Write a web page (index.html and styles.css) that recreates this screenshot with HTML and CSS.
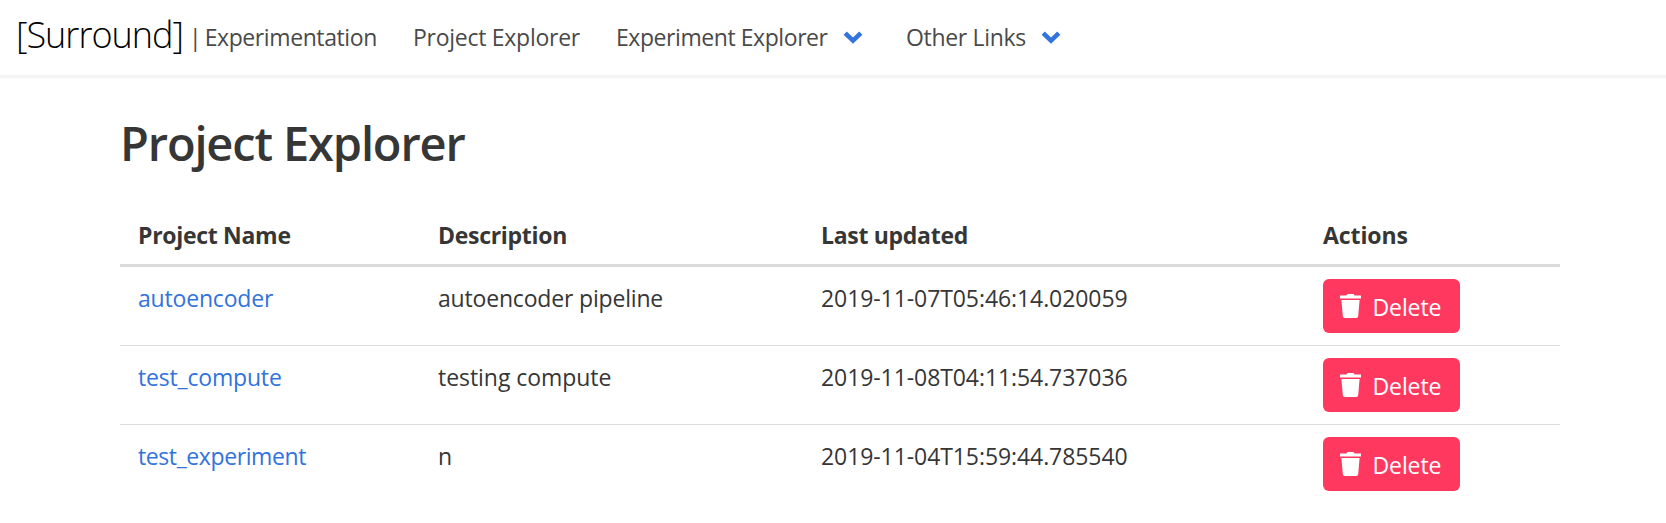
FILE: index.html
```html
<!DOCTYPE html>
<html lang="en">
<head>
<meta charset="utf-8">
<title>Project Explorer</title>
<link rel="stylesheet" href="styles.css">
</head>
<body>
<nav class="navbar">
  <a class="brand">
    <span class="logo">[Surround]</span>
    <span class="brand-sub">|<span class="brand-name">Experimentation</span></span>
  </a>
  <a class="nav-link nav-project">Project Explorer</a>
  <a class="nav-link nav-experiment">Experiment Explorer<svg class="chevron" width="20" height="13" viewBox="0 0 20 13"><path d="M2.2 2.2 10 9.6l7.8-7.4"/></svg></a>
  <a class="nav-link nav-other">Other Links<svg class="chevron" width="20" height="13" viewBox="0 0 20 13"><path d="M2.2 2.2 10 9.6l7.8-7.4"/></svg></a>
</nav>
<main class="container">
  <h1 class="title">Project Explorer</h1>
  <table class="table">
    <colgroup><col class="col-name"><col class="col-desc"><col class="col-date"><col></colgroup>
    <thead>
      <tr><th>Project Name</th><th>Description</th><th>Last updated</th><th class="actions">Actions</th></tr>
    </thead>
    <tbody>
      <tr>
        <td><a class="link">autoencoder</a></td><td>autoencoder pipeline</td><td class="date">2019-11-07T05:46:14.020059</td>
        <td class="action"><button class="delete"><svg class="trash" width="21" height="24" viewBox="0 0 21 24"><path d="M0 1.4h6.4L7.5 0h6l1.1 1.4H21v3.1H0zM1.4 6h18.2l-1.4 16.1a2 2 0 0 1-2 1.9H4.8a2 2 0 0 1-2-1.9z"/></svg><span>Delete</span></button></td>
      </tr>
      <tr>
        <td><a class="link">test_compute</a></td><td class="loose">testing compute</td><td class="date">2019-11-08T04:11:54.737036</td>
        <td class="action"><button class="delete"><svg class="trash" width="21" height="24" viewBox="0 0 21 24"><path d="M0 1.4h6.4L7.5 0h6l1.1 1.4H21v3.1H0zM1.4 6h18.2l-1.4 16.1a2 2 0 0 1-2 1.9H4.8a2 2 0 0 1-2-1.9z"/></svg><span>Delete</span></button></td>
      </tr>
      <tr>
        <td><a class="link tight">test_experiment</a></td><td>n</td><td class="date">2019-11-04T15:59:44.785540</td>
        <td class="action"><button class="delete"><svg class="trash" width="21" height="24" viewBox="0 0 21 24"><path d="M0 1.4h6.4L7.5 0h6l1.1 1.4H21v3.1H0zM1.4 6h18.2l-1.4 16.1a2 2 0 0 1-2 1.9H4.8a2 2 0 0 1-2-1.9z"/></svg><span>Delete</span></button></td>
      </tr>
    </tbody>
  </table>
</main>
</body>
</html>
```
FILE: styles.css
```css
* { box-sizing: border-box; }
body {
  margin: 0;
  background: #fff;
  color: #363636;
  font-family: "Open Sans", "Noto Sans", sans-serif;
  font-size: 23px;
  line-height: 36px;
  overflow: hidden;
}
.navbar {
  display: flex;
  height: 78px;
  padding-top: 7px;
  border-bottom: 3px solid #f5f5f5;
  color: #4a4a4a;
}
.brand { display: flex; width: 395px; }
.logo {
  flex: none;
  width: 189px;
  padding: 8px 0 0 16px;
  font-size: 36px;
  font-weight: 300;
  letter-spacing: -1px;
  line-height: 40px;
  color: #000;
}
.brand-sub { padding: 12px 0 0; white-space: nowrap; }
.brand-name { margin-left: 3px; letter-spacing: -0.4px; }
.nav-link { padding: 12px 18px 0; white-space: nowrap; }
.nav-project { width: 203px; letter-spacing: -0.27px; }
.nav-experiment { width: 290px; display: flex; justify-content: space-between; padding-right: 25px; letter-spacing: -0.43px; }
.nav-other { width: 192px; display: flex; justify-content: space-between; padding-right: 19px; letter-spacing: -0.32px; }
.chevron { flex: none; margin-top: 12px; fill: none; stroke: #3273dc; stroke-width: 4.6; }
.container { width: 1440px; margin: 0 0 0 120px; }
.title {
  margin: 0;
  padding-top: 38px;
  height: 138px;
  font-size: 47px;
  font-weight: 600;
  line-height: 54px;
  letter-spacing: -1.15px;
}
.table { width: 1440px; table-layout: fixed; border-collapse: separate; border-spacing: 0; }
.col-name { width: 300px; }
.col-desc { width: 383px; }
.col-date { width: 502px; }
th, td { padding: 13px 18px 11px; text-align: left; vertical-align: top; }
th { height: 51px; padding: 1px 18px 0; border-bottom: 3px solid #dbdbdb; font-weight: 700; letter-spacing: -0.3px; }
th.actions { letter-spacing: -0.1px; }
td { height: 79px; border-bottom: 1px solid #dbdbdb; letter-spacing: -0.18px; }
td.loose { letter-spacing: -0.05px; }
td.date { letter-spacing: -0.08px; }
td.action { padding: 12px 18px; letter-spacing: 0; }
tbody tr:last-child td { border-bottom: 0; }
.link { color: #3273dc; }
.tight { letter-spacing: -0.4px; }
.delete {
  display: flex;
  align-items: flex-start;
  width: 137px;
  height: 54px;
  padding: 0 0 0 17px;
  border: 0;
  border-radius: 6px;
  background: #ff3860;
  color: #fff;
  font: inherit;
}
.delete span { padding: 10px 0 0 11.5px; letter-spacing: -0.1px; }
.trash { margin-top: 15px; fill: #fff; }
```
